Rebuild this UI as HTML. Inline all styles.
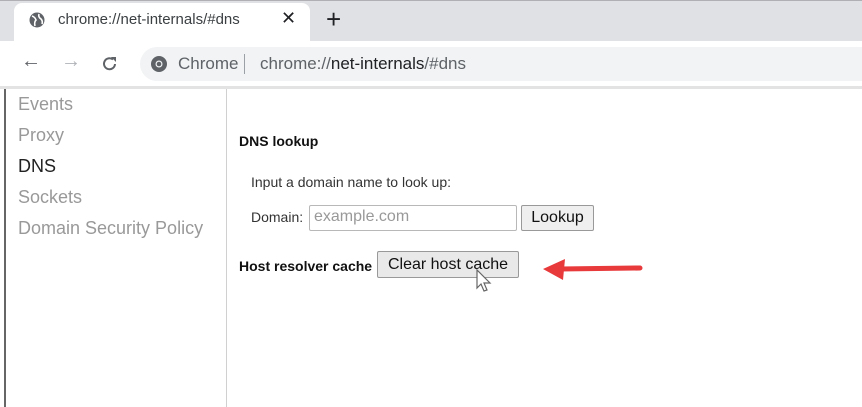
<!DOCTYPE html>
<html><head><style>
*{margin:0;padding:0;box-sizing:border-box}
body{width:862px;height:407px;overflow:hidden;background:#fff;font-family:"Liberation Sans",sans-serif;position:relative}
.abs{position:absolute}
</style></head><body>
<div class="abs" style="left:0;top:0;width:862px;height:41px;background:#dfe1e5;border-top:1px solid #b0b0b4"></div>
<div class="abs" style="left:14px;top:3px;width:296px;height:38px;background:#fff;border-radius:8px 8px 0 0"></div>
<svg class="abs" style="left:29px;top:12px" width="16" height="16" viewBox="0 0 16 16"><circle cx="8" cy="8" r="7.5" fill="#5f6368"/><path d="M3 4 Q6 5 7 8 Q5 10 6 14 M10 2 Q9 5 12 7 Q14 9 13 12" stroke="#fff" stroke-width="1.6" fill="none"/></svg>
<div class="abs" style="left:58px;top:11px;font-size:15px;color:#3c4043">chrome://net-internals/#dns</div>
<div class="abs" style="left:281px;top:8px;font-size:18px;color:#202124">✕</div>
<div class="abs" style="left:326px;top:4px;font-size:26px;color:#202124">+</div>
<div class="abs" style="left:0;top:41px;width:862px;height:46px;background:#fff"></div>
<div class="abs" style="left:140px;top:47px;width:722px;height:34px;background:#f1f3f4;border-radius:17px 0 0 17px"></div>
<div class="abs" style="left:21px;top:50px;font-size:20px;color:#5f6368">←</div>
<div class="abs" style="left:61px;top:50px;font-size:20px;color:#b0b3b8">→</div>
<svg class="abs" style="left:101px;top:55px" width="18" height="18" viewBox="0 0 18 18"><path d="M14 9 A5.5 5.5 0 1 1 12 4.5" stroke="#5f6368" stroke-width="2" fill="none"/><path d="M10 2 L15 2 L15 7 Z" fill="#5f6368"/></svg>
<svg class="abs" style="left:150px;top:55px" width="18" height="18" viewBox="0 0 18 18"><circle cx="9" cy="9" r="8" fill="#5f6368"/><circle cx="9" cy="9" r="3.5" fill="#f1f3f4"/><circle cx="9" cy="9" r="2.3" fill="#5f6368"/></svg>
<div class="abs" style="left:178px;top:54px;font-size:17px;color:#5f6368">Chrome</div>
<div class="abs" style="left:244px;top:54px;width:1px;height:20px;background:#9aa0a6"></div>
<div class="abs" style="left:260px;top:54px;font-size:17px;color:#5f6368">chrome://<span style="color:#202124">net-internals</span>/#dns</div>
<div class="abs" style="left:0;top:86px;width:862px;height:3px;background:#e3e3e3"></div>
<div class="abs" style="left:4px;top:89px;width:2px;height:318px;background:#666"></div>
<div class="abs" style="left:226px;top:89px;width:1px;height:318px;background:#d0d0d0"></div>
<div class="abs" style="left:18px;top:89px;font-size:18px;line-height:31px;color:#999">Events<br>Proxy<br><span style="color:#222">DNS</span><br>Sockets<br>Domain Security Policy</div>
<div class="abs" style="left:239px;top:133px;font-size:14px;font-weight:bold;color:#111">DNS lookup</div>
<div class="abs" style="left:251px;top:174px;font-size:14px;color:#333">Input a domain name to look up:</div>
<div class="abs" style="left:251px;top:209px;font-size:14px;color:#333">Domain:</div>
<div class="abs" style="left:309px;top:205px;width:208px;height:26px;border:1px solid #b8b8b8;border-radius:2px;font-size:16px;color:#999;padding:2px 4px">example.com</div>
<div class="abs" style="left:521px;top:205px;width:73px;height:26px;border:1px solid #999;border-radius:2px;background:#efefef;font-size:16px;color:#111;text-align:center;line-height:24px">Lookup</div>
<div class="abs" style="left:239px;top:258px;font-size:14px;font-weight:bold;color:#111">Host resolver cache</div>
<div class="abs" style="left:377px;top:251px;width:142px;height:27px;border:1px solid #999;border-radius:2px;background:#e9e9e9;font-size:16px;color:#111;text-align:center;line-height:25px">Clear host cache</div>
<svg class="abs" style="left:475px;top:268px" width="20" height="26" viewBox="0 0 20 26"><path d="M2 2 L2 20 L6 16 L9 23 L12 22 L9 15 L15 15 Z" fill="#fff" stroke="#666" stroke-width="1.2"/></svg>
<svg class="abs" style="left:540px;top:255px" width="105" height="30" viewBox="0 0 105 30"><path d="M20 14 L100 13" stroke="#e8393b" stroke-width="5" stroke-linecap="round"/><path d="M3 14 L25 4 L23 25 Z" fill="#e8393b"/></svg>
</body></html>
